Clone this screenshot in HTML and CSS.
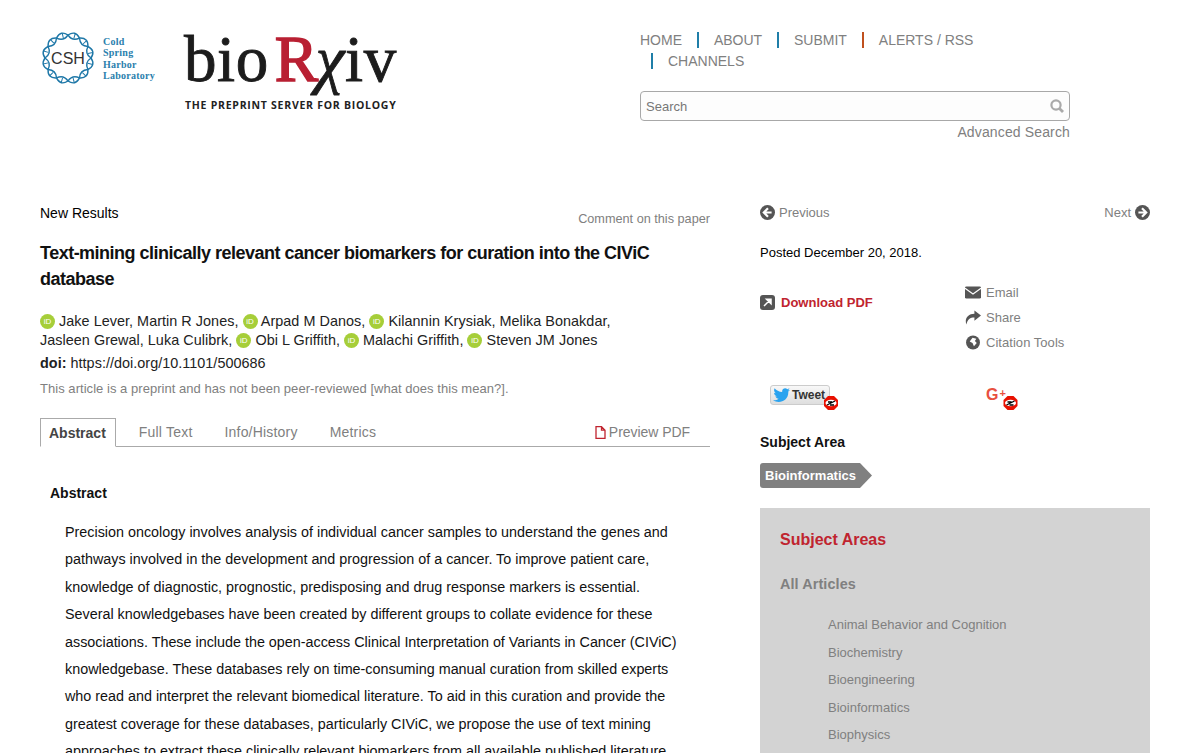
FILE: index.html
```html
<!DOCTYPE html>
<html lang="en">
<head>
    <meta charset="UTF-8">
    <title>Text-mining clinically relevant cancer biomarkers | bioRxiv</title>
    <link rel="stylesheet" href="styles.css">
</head>
<body>
    <header class="site-header">
        <div class="logos">
            <a class="csh-logo" href="#">
                <svg class="csh-mark" width="56" height="56" viewBox="-28 -28 56 56">
                    <g fill="none" stroke="#1f78a8" stroke-width="1.4">
                        <path d="M23 0Q28 7.5 19.9 11.5Q12 12 11.5 19.9Q7.5 28 0 23Q-4.4 16.4 -11.5 19.9Q-20.5 20.5 -19.9 11.5Q-16.4 4.4 -23 0Q-28 -7.5 -19.9 -11.5Q-12 -12 -11.5 -19.9Q-7.5 -28 0 -23Q4.4 -16.4 11.5 -19.9Q20.5 -20.5 19.9 -11.5Q16.4 -4.4 23 0Z"/>
                        <path d="M23 0Q16.4 4.4 19.9 11.5Q20.5 20.5 11.5 19.9Q4.4 16.4 0 23Q-7.5 28 -11.5 19.9Q-12 12 -19.9 11.5Q-28 7.5 -23 0Q-16.4 -4.4 -19.9 -11.5Q-20.5 -20.5 -11.5 -19.9Q-4.4 -16.4 0 -23Q7.5 -28 11.5 -19.9Q12 -12 19.9 -11.5Q28 -7.5 23 0Z"/>
                        <circle r="23" stroke-width="5" stroke-dasharray="1 11.04" stroke-dashoffset="-5.52"/>
                    </g>
                    <text class="csh-mark-text" x="0" y="5.500" text-anchor="middle">CSH</text>
                </svg>
                <span class="csh-name">Cold<br>Spring<br>Harbor<br>Laboratory</span>
            </a>
            <a class="biorxiv-logo" href="#">
                <span class="biorxiv-word">bio<span class="biorxiv-r">R</span><span class="biorxiv-chi">χ</span>iv</span>
                <span class="biorxiv-tag">THE PREPRINT SERVER FOR BIOLOGY</span>
            </a>
        </div>
        <div class="header-right">
            <ul class="main-nav">
                <li><a href="#">HOME</a></li>
                <li class="sep"><a href="#">ABOUT</a></li>
                <li class="sep"><a href="#">SUBMIT</a></li>
                <li class="sep sep-red"><a href="#">ALERTS / RSS</a></li>
                <li class="sep"><a href="#">CHANNELS</a></li>
            </ul>
            <div class="search-box">
                <span>Search</span>
                <svg width="14" height="14" viewBox="0 0 14 14"><circle cx="6" cy="6" r="4.600" fill="none" stroke="#aaa" stroke-width="2.200"/><path d="M9.200 9.200L13 13" stroke="#aaa" stroke-width="2.800"/></svg>
            </div>
            <a class="adv-search" href="#">Advanced Search</a>
        </div>
    </header>

    <div class="page">
        <main class="article">
            <div class="article-top">
                <span class="article-type">New Results</span>
                <a class="comment-link" href="#">Comment on this paper</a>
            </div>
            <h1>Text-mining clinically relevant cancer biomarkers for curation into the CIViC database</h1>
            <p class="authors">
                <span class="orcid">iD</span> Jake Lever, Martin R Jones, <span class="orcid">iD</span> Arpad M Danos, <span class="orcid">iD</span> Kilannin Krysiak, Melika Bonakdar,<br>
                Jasleen Grewal, Luka Culibrk, <span class="orcid">iD</span> Obi L Griffith, <span class="orcid">iD</span> Malachi Griffith, <span class="orcid">iD</span> Steven JM Jones
            </p>
            <p class="doi"><b>doi:</b> https://doi.org/10.1101/500686</p>
            <p class="preprint-note">This article is a preprint and has not been peer-reviewed [what does this mean?].</p>
            <div class="tabs">
                <a class="tab active" href="#">Abstract</a>
                <a class="tab" href="#">Full Text</a>
                <a class="tab" href="#">Info/History</a>
                <a class="tab" href="#">Metrics</a>
                <a class="tab preview" href="#">
                    <svg width="11" height="13" viewBox="0 0 11 13"><path d="M1 .7H6.500L10 4.200V12.300H1ZM6.500 .7V4.200H10" fill="none" stroke="#c0242f" stroke-width="1.300"/></svg>
                    Preview PDF
                </a>
            </div>
            <h2>Abstract</h2>
            <p class="abstract">Precision oncology involves analysis of individual cancer samples to understand the genes and pathways involved in the development and progression of a cancer. To improve patient care, knowledge of diagnostic, prognostic, predisposing and drug response markers is essential. Several knowledgebases have been created by different groups to collate evidence for these associations. These include the open-access Clinical Interpretation of Variants in Cancer (CIViC) knowledgebase. These databases rely on time-consuming manual curation from skilled experts who read and interpret the relevant biomedical literature. To aid in this curation and provide the greatest coverage for these databases, particularly CIViC, we propose the use of text mining approaches to extract these clinically relevant biomarkers from all available published literature.</p>
        </main>

        <aside class="sidebar">
            <div class="pager">
                <a href="#">
                    <svg width="15" height="15" viewBox="0 0 15 15"><circle cx="7.500" cy="7.500" r="7.500" fill="#555"/><path d="M8 3.200L3.800 7.500L8 11.800M4.200 7.500H11.600" fill="none" stroke="#fff" stroke-width="2.200"/></svg>
                    Previous
                </a>
                <a href="#">
                    Next
                    <svg width="15" height="15" viewBox="0 0 15 15"><circle cx="7.500" cy="7.500" r="7.500" fill="#555"/><path d="M7 3.200L11.200 7.500L7 11.800M10.800 7.500H3.400" fill="none" stroke="#fff" stroke-width="2.200"/></svg>
                </a>
            </div>
            <p class="posted">Posted December 20, 2018.</p>
            <div class="actions">
                <a class="download" href="#">
                    <svg width="15" height="15" viewBox="0 0 15 15"><rect width="15" height="15" rx="3" fill="#555"/><path d="M4 11L10 5M6.500 4.200H11V8.700Z" fill="#fff" stroke="#fff" stroke-width="1.500"/></svg>
                    Download PDF
                </a>
                <ul class="tools">
                    <li>
                        <svg width="17" height="13" viewBox="0 0 17 13"><rect width="17" height="13" rx="1.500" fill="#555"/><path d="M0 2L8.500 8L17 2" fill="none" stroke="#fff" stroke-width="1.300"/></svg>
                        Email
                    </li>
                    <li>
                        <svg width="17" height="15" viewBox="0 0 17 15"><path d="M10 0L17 5.500L10 11V7.600C5.500 7.600 2.600 9.500 1.500 15C-.8 8.500 3 3.500 10 3.400Z" fill="#555"/></svg>
                        Share
                    </li>
                    <li>
                        <svg width="17" height="15" viewBox="0 0 17 15"><circle cx="8.500" cy="7.500" r="7.400" fill="#555"/><path d="M8 2.500L12 3.500L10.500 6L12.500 8L9.500 11.500L8 8L5 6.500Z" fill="#fff"/></svg>
                        Citation Tools
                    </li>
                </ul>
            </div>
            <div class="social">
                <div class="social-item">
                    <a class="tweet" href="#">
                        <svg width="17" height="14" viewBox="0 0 17 14"><path d="M17 1.700C16.400 2 15.700 2.200 15 2.300C15.700 1.800 16.300 1.100 16.500 .3C15.800 .7 15.100 1 14.300 1.200C12.400 -.8 8.600 .8 9.200 4C6 3.900 3.400 2.400 1.600 .3C.6 2 1.200 4.100 2.700 5.200C2.100 5.200 1.600 5 1.100 4.800C1.100 6.500 2.300 7.900 3.900 8.300C3.400 8.400 2.900 8.400 2.400 8.300C2.900 9.700 4.100 10.600 5.600 10.700C4.100 12 2.100 12.500 0 12.300C6.300 16.300 15.800 12.900 15.300 3.500C16 3 16.600 2.400 17 1.700Z" fill="#2aa3ef"/></svg>
                        Tweet
                    </a>
                    <svg class="blocker" width="14" height="14" viewBox="0 0 14 14"><use href="#blocker-mark"/></svg>
                </div>
                <div class="social-item social-plus">
                    <span class="gplus">G<span class="gplus-sign">+</span></span>
                    <svg class="blocker" width="15" height="14" viewBox="0 0 14 14"><use href="#blocker-mark"/></svg>
                </div>
            </div>
            <h3 class="subject-title">Subject Area</h3>
            <a class="subject-tag" href="#">Bioinformatics</a>
            <nav class="subject-panel">
                <h4>Subject Areas</h4>
                <h5>All Articles</h5>
                <ul>
                    <li>Animal Behavior and Cognition</li>
                    <li>Biochemistry</li>
                    <li>Bioengineering</li>
                    <li>Bioinformatics</li>
                    <li>Biophysics</li>
                </ul>
            </nav>
        </aside>
    </div>

    <svg class="defs" width="0" height="0">
        <g id="blocker-mark">
            <path d="M4 0H10L14 4V10L10 14H4L0 10V4Z" fill="#e81000"/>
            <ellipse cx="7" cy="7" rx="5.500" ry="3.200" fill="#fff"/>
            <path d="M3 9L11 5M4 6H8M6 9H10" stroke="#000" stroke-width="1.300"/>
        </g>
    </svg>
</body>
</html>
```

FILE: styles.css
```css
html, body {
    height: 753px;
    overflow: hidden;
}

body {
    margin: 0;
    background: #fff;
    color: #000;
    font-family: "Liberation Sans", Arial, sans-serif;
    font-size: 14px;
}

a {
    color: inherit;
    text-decoration: none;
}

ul {
    list-style: none;
    margin: 0;
    padding: 0;
}

p, h1, h2, h3, h4, h5 {
    margin: 0;
}

.defs {
    display: block;
}

/* header */
.site-header {
    display: flex;
    height: 190px;
    padding: 0 37px 0 40px;
}

.logos {
    display: flex;
    width: 600px;
}

.csh-logo {
    display: flex;
    width: 144px;
    padding-top: 30px;
    align-items: flex-start;
}

.csh-mark-text {
    font-family: "Liberation Sans", sans-serif;
    font-size: 16px;
    fill: #333;
}

.csh-name {
    margin: 5.500px 0 0 7px;
    font-family: "Liberation Serif", serif;
    font-size: 10px;
    font-weight: bold;
    line-height: 11.600px;
    letter-spacing: .25px;
    color: #2a80ad;
}

.biorxiv-logo {
    display: flex;
    flex-direction: column;
    padding-top: 24px;
}

.biorxiv-word {
    font-family: "Liberation Serif", serif;
    font-size: 65px;
    line-height: 70px;
    color: #1c1c1c;
    letter-spacing: .6px;
    -webkit-text-stroke: .9px #1c1c1c;
}

.biorxiv-r {
    margin-left: 6px;
    color: #b92033;
    -webkit-text-stroke: 1.600px #b92033;
}

.biorxiv-chi {
    margin-left: -3px;
    font-style: italic;
}

.biorxiv-tag {
    margin: 4px 0 0 1px;
    font-size: 10.500px;
    font-weight: bold;
    letter-spacing: .74px;
    color: #222;
    font-family: "Open Sans", sans-serif;
}

.header-right {
    width: 430px;
    padding-top: 30px;
}

.main-nav {
    height: 61px;
    color: #808080;
    line-height: 21px;
}

.main-nav li {
    display: inline-block;
}

.main-nav .sep {
    margin-left: 11px;
}

.main-nav .sep a {
    padding-left: 15px;
    border-left: 2px solid #1f7ea8;
}

.main-nav .sep-red a {
    border-left-color: #c0501e;
}

.search-box {
    display: flex;
    align-items: center;
    justify-content: space-between;
    box-sizing: border-box;
    height: 30px;
    padding: 0 5px;
    border: 1px solid #a8a8a8;
    border-radius: 4px;
    background: #fdfdfd;
    font-size: 13px;
    color: #777;
}

.adv-search {
    display: block;
    margin-top: 2px;
    text-align: right;
    color: #808080;
    line-height: 19px;
    letter-spacing: .14px;
}

/* page columns */
.page {
    display: grid;
    grid-template-columns: 670px 390px;
    column-gap: 50px;
    padding: 0 37px 0 40px;
}

.article-top {
    display: flex;
    justify-content: space-between;
    height: 50px;
    padding-top: 15px;
    box-sizing: border-box;
}

.comment-link {
    margin-top: 7px;
    font-size: 12.700px;
    color: #808080;
}

h1 {
    font-size: 18px;
    line-height: 26px;
    letter-spacing: -.51px;
    color: #111;
}

.authors {
    margin-top: 20px;
    font-size: 14.400px;
    line-height: 19px;
    letter-spacing: .04px;
    color: #222;
}

.orcid {
    display: inline-block;
    width: 15px;
    height: 15px;
    border-radius: 50%;
    background: #a6ce39;
    color: #fff;
    font-size: 8px;
    line-height: 15px;
    text-align: center;
    vertical-align: 2px;
}

.doi {
    margin-top: 4px;
    font-size: 14.400px;
    line-height: 19px;
    letter-spacing: .03px;
    color: #222;
}

.preprint-note {
    margin-top: 6px;
    font-size: 13px;
    line-height: 19px;
    letter-spacing: .04px;
    color: #808080;
}

.tabs {
    display: flex;
    height: 28px;
    margin-top: 20px;
    border-bottom: 1px solid #aaa;
    color: #808080;
    letter-spacing: .2px;
}

.tab {
    padding: 6px 0 0;
    margin-left: 32px;
}

.tab.active {
    box-sizing: border-box;
    height: 29px;
    margin-left: 0;
    padding: 6px 9px 0 8px;
    border: 1px solid #aaa;
    border-bottom: 1px solid #fff;
    background: #fff;
    color: #444;
    font-weight: bold;
    letter-spacing: 0;
}

.tab.active + .tab {
    margin-left: 23px;
}

.tab.preview {
    display: flex;
    align-items: center;
    gap: 3px;
    height: 28px;
    padding: 0;
    margin-left: auto;
    margin-right: 20px;
    letter-spacing: -.05px;
}

h2 {
    margin: 37px 0 0 10px;
    font-size: 14px;
    line-height: 19px;
    color: #111;
}

.abstract {
    margin: 16px 25px 0 25px;
    font-size: 14.350px;
    line-height: 27.400px;
    color: #111;
}

/* sidebar */
.pager {
    display: flex;
    justify-content: space-between;
    padding-top: 15px;
    font-size: 13px;
    color: #808080;
}

.pager a {
    display: flex;
    align-items: center;
    gap: 4px;
}

.posted {
    margin-top: 23px;
    font-size: 13px;
    line-height: 19px;
}

.actions {
    display: flex;
    margin-top: 18px;
}

.download {
    display: flex;
    align-items: center;
    gap: 6px;
    width: 205px;
    height: 20px;
    margin-top: 12px;
    font-size: 13px;
    font-weight: bold;
    color: #c0242f;
}

.tools {
    font-size: 13px;
    letter-spacing: .04px;
    color: #808080;
}

.tools li {
    display: flex;
    align-items: center;
    gap: 5px;
    height: 25px;
}

.tools svg {
    width: 16px;
}

.social {
    display: flex;
    height: 38px;
    margin-top: 30px;
    padding-left: 10px;
}

.social-item {
    position: relative;
    flex: none;
    width: 216px;
}

.social-plus {
    width: 100px;
}

.tweet {
    display: flex;
    align-items: center;
    gap: 2px;
    box-sizing: border-box;
    width: 60px;
    height: 20px;
    padding-left: 2px;
    border: 1px solid #ccc;
    border-radius: 3px;
    background: linear-gradient(#f8f8f8, #dedede);
    font-size: 12px;
    font-weight: bold;
    color: #333;
}

.gplus {
    display: block;
    font-size: 16px;
    font-weight: bold;
    line-height: 16px;
    color: #e8503f;
}

.gplus-sign {
    margin-left: 1px;
    font-size: 11px;
    vertical-align: 3px;
}

.blocker {
    position: absolute;
    left: 54px;
    top: 11px;
}

.social-plus .blocker {
    left: 17px;
}

.subject-title {
    margin-top: 10px;
    font-size: 14px;
    line-height: 19px;
    color: #111;
}

.subject-tag {
    display: block;
    box-sizing: border-box;
    width: 112px;
    height: 25px;
    margin-top: 11px;
    padding-left: 5px;
    background: #808080;
    clip-path: polygon(0 0, 100px 0, 100% 50%, 100px 100%, 0 100%);
    border-radius: 3px 0 0 3px;
    font-size: 13px;
    font-weight: bold;
    line-height: 25px;
    color: #fff;
}

.subject-panel {
    margin-top: 20px;
    height: 300px;
    padding: 21px 20px 20px;
    background: #d3d3d3;
}

.subject-panel h4 {
    font-size: 16px;
    line-height: 22px;
    color: #c0242f;
}

.subject-panel h5 {
    margin-top: 23px;
    font-size: 14.400px;
    line-height: 20px;
    letter-spacing: .1px;
    color: #808080;
}

.subject-panel ul {
    margin: 17px 0 0 48px;
    font-size: 13px;
    line-height: 27.500px;
    color: #808080;
}
```
